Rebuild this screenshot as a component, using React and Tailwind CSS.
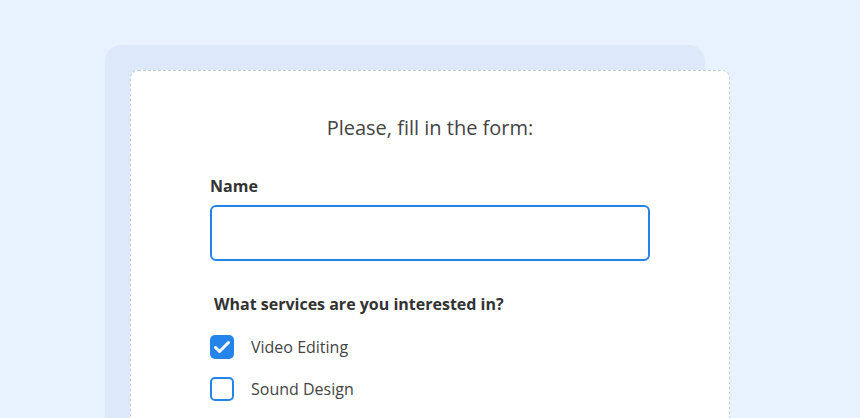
export default function App() {
  return (
    <div className="w-[860px] h-[418px] overflow-hidden bg-[#e8f2fe]" style={{ fontFamily: '"Open Sans", sans-serif' }}>
      <div className="pt-[45px] pl-[105px]">
        <div className="w-[600px] h-[400px] rounded-[16px] bg-[#dde9fa] pt-[25px] pl-[25px]">
          <div className="w-[600px] h-[400px] bg-white rounded-[8px] border border-dashed border-[#c3cfdd] px-[79px] pt-[43px]">
            <h1 className="text-center text-[20px] leading-[28px] text-[#444]">Please, fill in the form:</h1>
            <label className="block mt-[33px] text-[16px] leading-[22px] font-bold text-[#333]">Name</label>
            <div className="mt-[8px] h-[56px] w-[440px] rounded-[6px] border-2 border-[#2584ea]"></div>
            <p className="mt-[32px] ml-[4px] text-[16px] leading-[22px] font-bold text-[#333]">What services are you interested in?</p>
            <div className="mt-[20px] flex flex-col gap-[18px]">
              <div className="flex items-center gap-[17px]">
                <div className="w-[24px] h-[24px] rounded-[5px] bg-[#2584ea] flex items-center justify-center">
                  <svg width="24" height="24" viewBox="0 0 24 24" fill="none">
                    <path d="M5.5 12.5l4 4L18.5 7.5" stroke="white" strokeWidth="3" strokeLinecap="round" strokeLinejoin="round" />
                  </svg>
                </div>
                <span className="text-[16px] leading-[22px] text-[#444]">Video Editing</span>
              </div>
              <div className="flex items-center gap-[17px]">
                <div className="w-[24px] h-[24px] rounded-[5px] border-2 border-[#2584ea] bg-white"></div>
                <span className="text-[16px] leading-[22px] text-[#444]">Sound Design</span>
              </div>
            </div>
          </div>
        </div>
      </div>
    </div>
  );
}
